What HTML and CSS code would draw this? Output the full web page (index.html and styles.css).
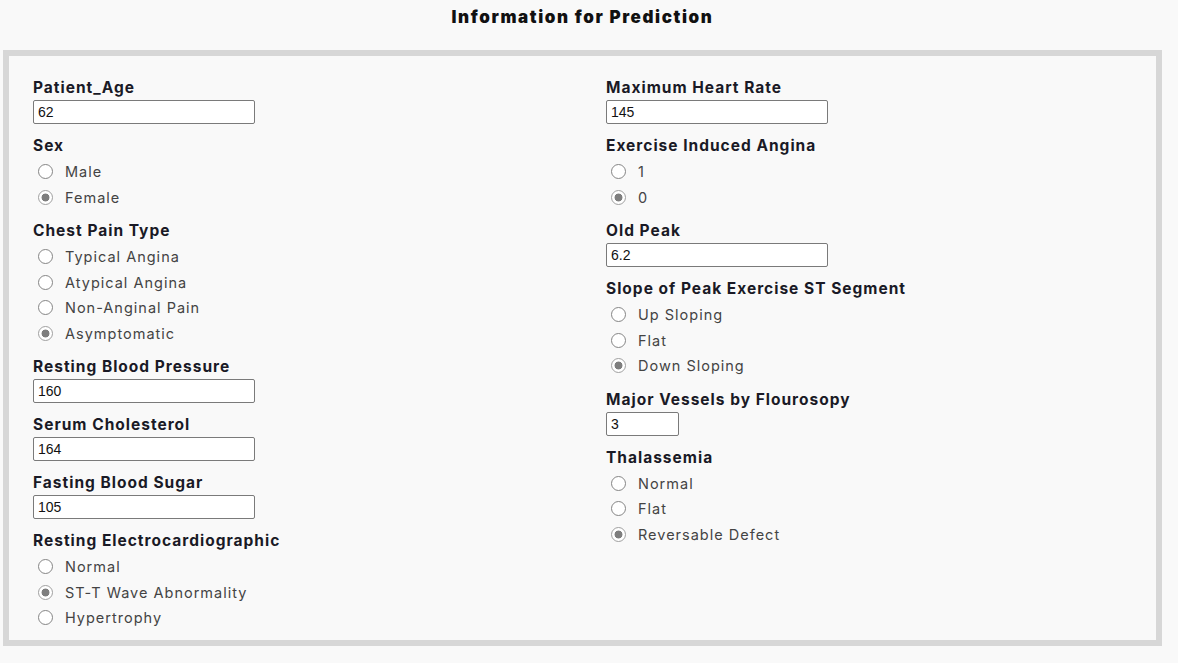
FILE: index.html
```html
<!DOCTYPE html>
<html lang="en">
<head>
<meta charset="utf-8">
<title>Information for Prediction</title>
<link rel="stylesheet" href="styles.css">
</head>
<body>
<div class="page">
  <h1 class="title">Information for Prediction</h1>
  <form class="frame">
    <div class="col">
      <div class="field">
        <label class="lbl">Patient_Age</label>
        <input class="txt" type="text" value="62">
      </div>
      <div class="field">
        <span class="lbl">Sex</span>
        <label class="opt"><input type="radio" name="sex"><span>Male</span></label>
        <label class="opt"><input type="radio" name="sex" checked><span>Female</span></label>
      </div>
      <div class="field">
        <span class="lbl">Chest Pain Type</span>
        <label class="opt"><input type="radio" name="cp"><span>Typical Angina</span></label>
        <label class="opt"><input type="radio" name="cp"><span>Atypical Angina</span></label>
        <label class="opt"><input type="radio" name="cp"><span>Non-Anginal Pain</span></label>
        <label class="opt"><input type="radio" name="cp" checked><span>Asymptomatic</span></label>
      </div>
      <div class="field">
        <label class="lbl">Resting Blood Pressure</label>
        <input class="txt" type="text" value="160">
      </div>
      <div class="field">
        <label class="lbl">Serum Cholesterol</label>
        <input class="txt" type="text" value="164">
      </div>
      <div class="field">
        <label class="lbl">Fasting Blood Sugar</label>
        <input class="txt" type="text" value="105">
      </div>
      <div class="field">
        <span class="lbl">Resting Electrocardiographic</span>
        <label class="opt"><input type="radio" name="ecg"><span>Normal</span></label>
        <label class="opt"><input type="radio" name="ecg" checked><span>ST-T Wave Abnormality</span></label>
        <label class="opt"><input type="radio" name="ecg"><span>Hypertrophy</span></label>
      </div>
    </div>
    <div class="col">
      <div class="field">
        <label class="lbl">Maximum Heart Rate</label>
        <input class="txt" type="text" value="145">
      </div>
      <div class="field">
        <span class="lbl">Exercise Induced Angina</span>
        <label class="opt"><input type="radio" name="ang"><span>1</span></label>
        <label class="opt"><input type="radio" name="ang" checked><span>0</span></label>
      </div>
      <div class="field">
        <label class="lbl">Old Peak</label>
        <input class="txt" type="text" value="6.2">
      </div>
      <div class="field">
        <span class="lbl">Slope of Peak Exercise ST Segment</span>
        <label class="opt"><input type="radio" name="slope"><span>Up Sloping</span></label>
        <label class="opt"><input type="radio" name="slope"><span>Flat</span></label>
        <label class="opt"><input type="radio" name="slope" checked><span>Down Sloping</span></label>
      </div>
      <div class="field">
        <label class="lbl">Major Vessels by Flourosopy</label>
        <input class="txt txt-short" type="text" value="3">
      </div>
      <div class="field">
        <span class="lbl">Thalassemia</span>
        <label class="opt"><input type="radio" name="thal"><span>Normal</span></label>
        <label class="opt"><input type="radio" name="thal"><span>Flat</span></label>
        <label class="opt"><input type="radio" name="thal" checked><span>Reversable Defect</span></label>
      </div>
    </div>
  </form>
</div>
</body>
</html>
```

FILE: styles.css
```css
html, body {
  margin: 0;
  padding: 0;
  background: #f9f9f9;
}

.page {
  width: 1159px;
  margin-left: 3px;
  font-family: Inter, "Noto Sans", sans-serif;
}

.title {
  margin: 0;
  padding-top: 7px;
  height: 50px;
  box-sizing: border-box;
  text-align: center;
  font-size: 17px;
  line-height: 20px;
  font-weight: 900;
  letter-spacing: 1.6px;
  color: #111;
}

.frame {
  box-sizing: border-box;
  width: 1159px;
  border: 6px solid #d7d7d7;
  background: #f9f9f9;
  padding: 23px 0 9px 24px;
  display: grid;
  grid-template-columns: 573px 1fr;
  align-items: start;
}

.col {
  display: flex;
  flex-direction: column;
  gap: 12px;
}

.field {
  display: flex;
  flex-direction: column;
  align-items: flex-start;
}

.lbl {
  display: block;
  font-size: 15.5px;
  line-height: 18px;
  font-weight: 700;
  letter-spacing: 1px;
  color: #1a1a26;
  margin-bottom: 4px;
}

.txt {
  box-sizing: border-box;
  width: 222px;
  height: 24px;
  margin: -1px 0 1px;
  padding: 0 4px;
  border: 1px solid #7a7a7a;
  border-radius: 2px;
  background: #fff;
  font-family: "Liberation Sans", Arial, sans-serif;
  font-size: 14px;
  letter-spacing: 0;
  color: #111;
}

.txt-short {
  width: 73px;
}

.opt {
  display: flex;
  align-items: center;
  height: 25.5px;
  padding-left: 5px;
  font-size: 14.5px;
  letter-spacing: 1px;
  color: #444;
}

.opt input {
  appearance: none;
  -webkit-appearance: none;
  box-sizing: border-box;
  width: 15px;
  height: 15px;
  margin: 0 12px 0 0;
  border: 1px solid #858585;
  border-radius: 50%;
  background: #fff;
  flex: none;
}

.opt input:checked {
  border-color: #a0a0a0;
  background: radial-gradient(circle, #7e7e7e 0 3.6px, #ffffff 4.3px);
}
```
